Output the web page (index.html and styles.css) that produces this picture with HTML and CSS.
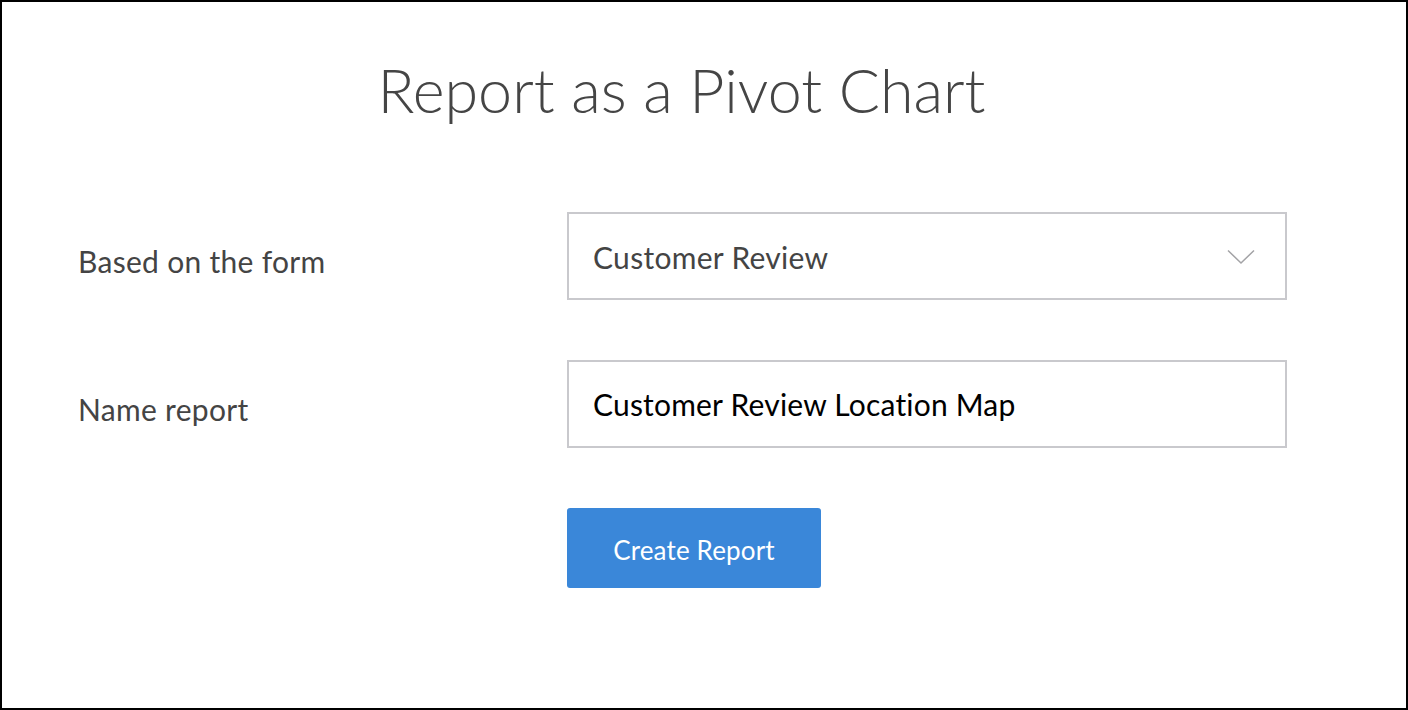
FILE: index.html
```html
<!DOCTYPE html>
<html lang="en">
	<head>
		<meta charset="UTF-8">
		<title>Report as a Pivot Chart</title>
		<link rel="stylesheet" href="styles.css">
	</head>
	<body>
		<div class="page">
			<h1 class="title">Report as a Pivot Chart</h1>
			<form class="report-form">
				<label class="field-label">Based on the form</label>
				<div class="select-box">
					<span class="select-text">Customer Review</span>
					<svg class="chevron" width="28" height="16" viewBox="0 0 28 16">
						<polyline points="1,1.5 14,14 27,1.5" fill="none" stroke="#a3a3a6" stroke-width="1.5"/>
					</svg>
				</div>

				<label class="field-label">Name report</label>
				<input class="text-input" type="text" value="Customer Review Location Map">

				<span></span>
				<div class="actions">
					<button type="button" class="btn-create">Create Report</button>
				</div>
			</form>
		</div>
	</body>
</html>
```

FILE: styles.css
```css
*{
	margin: 0;
	padding: 0;
	box-sizing: border-box;
}
body{
	font-family: Lato, "Open Sans", sans-serif;
	background: #fff;
}
.page{
	height: 710px;
	border: 2px solid #000;
	padding: 52px 121px 0 76px;
}
.title{
	font-weight: 300;
	font-size: 61px;
	line-height: 72px;
	color: #454545;
	text-align: center;
}
.report-form{
	margin-top: 86px;
	display: grid;
	grid-template-columns: 489px 720px;
	row-gap: 60px;
	align-items: center;
}
.field-label{
	font-size: 30px;
	line-height: 36px;
	letter-spacing: 0.3px;
	color: #444;
	padding-top: 10px;
}
.select-box{
	height: 88px;
	border: 2px solid #c9c9cd;
	display: flex;
	align-items: center;
	justify-content: space-between;
	padding: 2px 30px 0 24px;
}
.select-text{
	font-size: 30px;
	letter-spacing: 0.3px;
	color: #444;
}
.chevron{
	display: block;
}
.text-input{
	height: 88px;
	border: 2px solid #c9c9cd;
	padding: 0 24px;
	font-family: Lato, "Open Sans", sans-serif;
	font-size: 30px;
	letter-spacing: 0.2px;
	color: #000;
	outline: none;
}
.btn-create{
	width: 254px;
	height: 80px;
	padding-top: 4px;
	background: #3a87d9;
	color: #fff;
	border: none;
	border-radius: 3px;
	font-family: Lato, "Open Sans", sans-serif;
	font-size: 26px;
	letter-spacing: 0.15px;
}
```
